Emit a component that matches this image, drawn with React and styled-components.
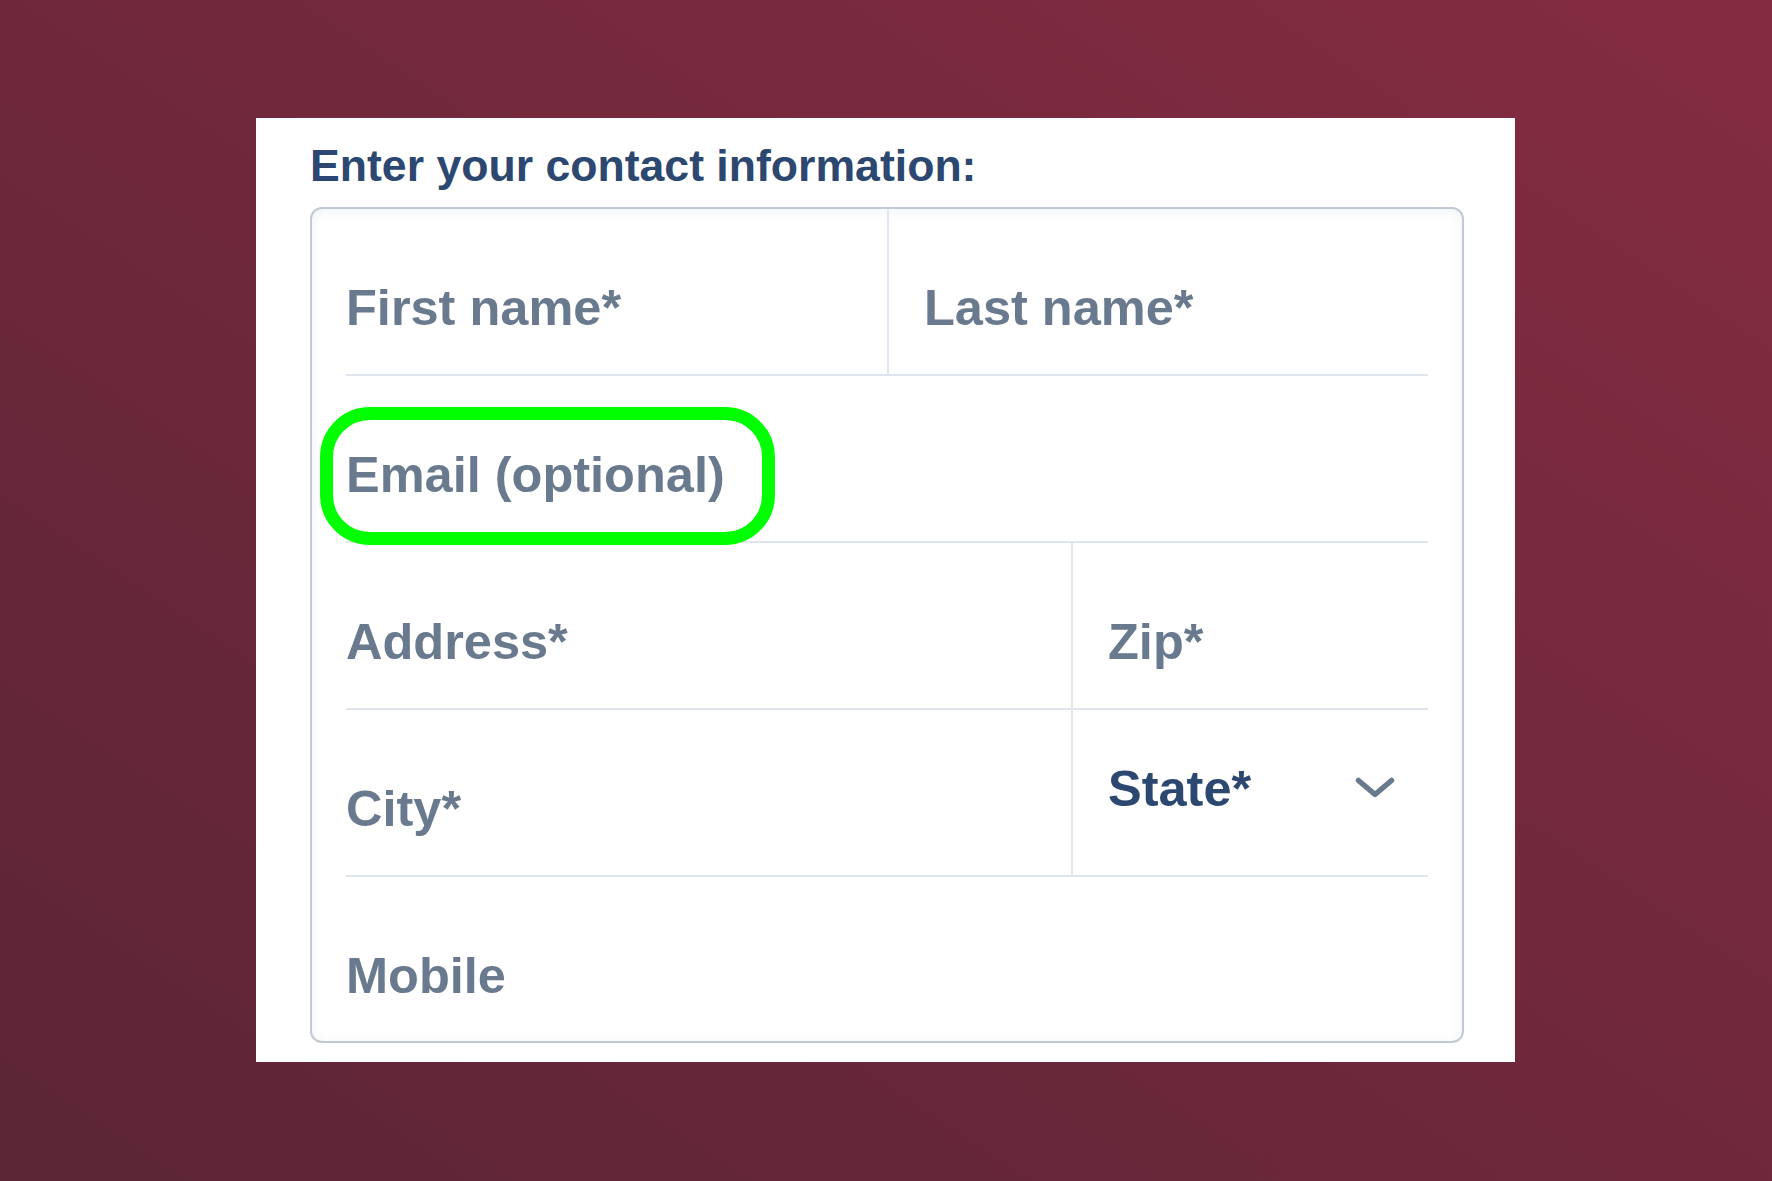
import styled, { createGlobalStyle } from "styled-components";

const GlobalStyle = createGlobalStyle`
  html, body {
    margin: 0;
    padding: 0;
  }
  body {
    font-family: "Liberation Sans", Arial, sans-serif;
  }
`;

const Page = styled.div`
  width: 1772px;
  height: 1181px;
  background: linear-gradient(to top right, #5b2536, #842b41);
  padding-top: 118px;
  padding-left: 256px;
  box-sizing: border-box;
`;

const Card = styled.div`
  width: 1259px;
  height: 944px;
  background: #ffffff;
  padding: 23px 51px 0 54px;
  box-sizing: border-box;
`;

const Title = styled.h2`
  margin: 0 0 16px;
  font-size: 44.6px;
  line-height: 50px;
  font-weight: 700;
  color: #2c4770;
`;

const Fieldset = styled.div`
  width: 1154px;
  border: 2px solid #c2c9d2;
  border-radius: 12px;
  padding: 0 34px;
  box-sizing: border-box;
  box-shadow: inset 0 2px 12px rgba(60, 90, 130, 0.08);
`;

const Row = styled.div`
  position: relative;
  display: grid;
  grid-template-columns: ${(p) => p.$cols || "1fr"};
  height: ${(p) => (p.$last ? "164px" : "167px")};
  box-sizing: border-box;
  border-bottom: ${(p) => (p.$last ? "none" : "2px solid #dfe4ee")};
`;

const Cell = styled.div`
  display: flex;
  align-items: flex-start;
  justify-content: space-between;
  padding-top: ${(p) => (p.$raised ? "51px" : "71px")};
  padding-left: ${(p) => (p.$divided ? "35px" : "0")};
  padding-right: ${(p) => (p.$select ? "33px" : "0")};
  border-left: ${(p) => (p.$divided ? "2px solid #dfe4ee" : "none")};
`;

const Label = styled.span`
  font-size: 50.5px;
  line-height: 56px;
  font-weight: 700;
  color: ${(p) => (p.$dark ? "#2c4770" : "#6a7a8e")};
  white-space: nowrap;
`;

const Chevron = styled.svg`
  width: 40px;
  height: 22px;
  margin-top: 16px;
`;

const Highlight = styled.div`
  position: absolute;
  left: -26px;
  top: 31px;
  width: 455px;
  height: 138px;
  box-sizing: border-box;
  border: 13px solid #00ff00;
  border-radius: 50px;
  pointer-events: none;
`;

export default function App() {
  return (
    <>
      <GlobalStyle />
      <Page>
        <Card>
          <Title>Enter your contact information:</Title>
          <Fieldset>
            <Row $cols="541px 1fr">
              <Cell>
                <Label>First name*</Label>
              </Cell>
              <Cell $divided>
                <Label>Last name*</Label>
              </Cell>
            </Row>
            <Row>
              <Cell>
                <Label>Email (optional)</Label>
              </Cell>
              <Highlight />
            </Row>
            <Row $cols="725px 1fr">
              <Cell>
                <Label>Address*</Label>
              </Cell>
              <Cell $divided>
                <Label>Zip*</Label>
              </Cell>
            </Row>
            <Row $cols="725px 1fr">
              <Cell>
                <Label>City*</Label>
              </Cell>
              <Cell $divided $raised $select>
                <Label $dark>State*</Label>
                <Chevron viewBox="0 0 40 22" fill="none">
                  <path
                    d="M3.5 3.5 L20 17.5 L36.5 3.5"
                    stroke="#6a7a8e"
                    strokeWidth="5.5"
                    strokeLinecap="round"
                    strokeLinejoin="round"
                  />
                </Chevron>
              </Cell>
            </Row>
            <Row $last>
              <Cell>
                <Label>Mobile</Label>
              </Cell>
            </Row>
          </Fieldset>
        </Card>
      </Page>
    </>
  );
}
